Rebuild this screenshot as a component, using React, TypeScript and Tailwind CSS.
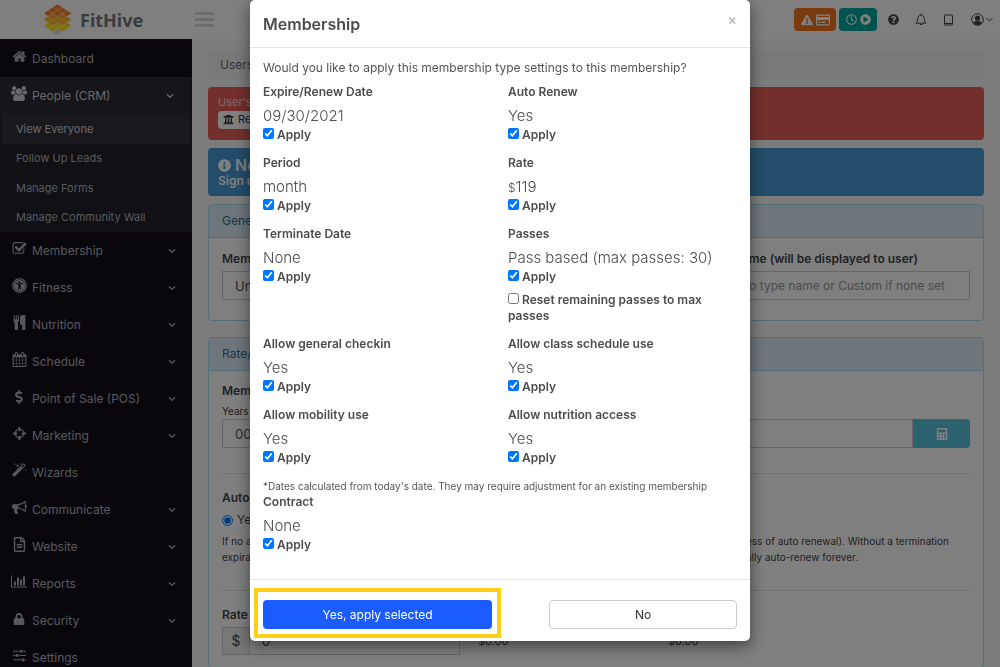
import { useState } from 'react';
import type { ReactNode } from 'react';
import {
    FaCalculator,
    FaChevronDown,
    FaDollarSign,
    FaExclamationTriangle,
    FaInfoCircle,
    FaLock,
    FaPlayCircle,
    FaQuestionCircle,
    FaRegClock,
    FaRegCreditCard,
    FaRegFileAlt,
    FaUniversalAccess,
    FaUniversity,
} from 'react-icons/fa';

const PATHS = {
    home: 'M1472 992v480q0 26-19 45t-45 19h-384v-384h-256v384h-384q-26 0-45-19t-19-45v-480q0-1 .5-3t.5-3l575-474 575 474q1 2 1 6zm223-69l-62 74q-8 9-21 11h-3q-13 0-21-7l-692-577-692 577q-12 8-24 7-13-2-21-11l-62-74q-8-10-7-23.5t11-21.5l719-599q32-26 76-26t76 26l244 204v-195q0-14 9-23t23-9h192q14 0 23 9t9 23v408l219 182q10 8 11 21.5t-7 23.5z',
    users: 'M593 896q-162 5-265 128h-134q-82 0-138-40.5t-56-118.5q0-353 124-353 6 0 43.5 21t97.5 42.5 119 21.5q67 0 133-23-5 37-5 66 0 139 81 256zm1071 637q0 120-73 189.5t-194 69.5h-874q-121 0-194-69.5t-73-189.5q0-53 3.5-103.5t14-109 26.5-108.5 43-97.5 62-81 85.5-53.5 111.5-20q10 0 43 21.5t73 48 107 48 135 21.5 135-21.5 107-48 73-48 43-21.5q61 0 111.5 20t85.5 53.5 62 81 43 97.5 26.5 108.5 14 109 3.5 103.5zm-1024-1277q0 106-75 181t-181 75-181-75-75-181 75-181 181-75 181 75 75 181zm704 384q0 159-112.5 271.5t-271.5 112.5-271.5-112.5-112.5-271.5 112.5-271.5 271.5-112.5 271.5 112.5 112.5 271.5zm576 225q0 78-56 118.5t-138 40.5h-134q-103-123-265-128 81-117 81-256 0-29-5-66 66 23 133 23 59 0 119-21.5t97.5-42.5 43.5-21q124 0 124 353zm-128-609q0 106-75 181t-181 75-181-75-75-181 75-181 181-75 181 75 75 181z',
    check: 'M1472 930v318q0 119-84.5 203.5t-203.5 84.5h-832q-119 0-203.5-84.5t-84.5-203.5v-832q0-119 84.5-203.5t203.5-84.5h832q63 0 117 25 15 7 18 23 3 17-9 29l-49 49q-10 10-23 10-3 0-9-2-23-6-45-6h-832q-66 0-113 47t-47 113v832q0 66 47 113t113 47h832q66 0 113-47t47-113v-254q0-13 9-22l64-64q10-10 23-10 6 0 12 3 20 8 20 29zm231-489l-814 814q-24 24-57 24t-57-24l-430-430q-24-24-24-57t24-57l110-110q24-24 57-24t57 24l263 263 647-647q24-24 57-24t57 24l110 110q24 24 24 57t-24 57z',
    cutlery: 'M832 64v640q0 61-35.5 111t-92.5 70v779q0 52-38 90t-90 38h-128q-52 0-90-38t-38-90v-779q-57-20-92.5-70t-35.5-111v-640q0-26 19-45t45-19 45 19 19 45v416q0 26 19 45t45 19 45-19 19-45v-416q0-26 19-45t45-19 45 19 19 45v416q0 26 19 45t45 19 45-19 19-45v-416q0-26 19-45t45-19 45 19 19 45zm768 0v1600q0 52-38 90t-90 38h-128q-52 0-90-38t-38-90v-512h-224q-13 0-22.5-9.5t-9.5-22.5v-800q0-132 94-226t226-94h256q26 0 45 19t19 45z',
    calendar: 'M192 1664h288v-288h-288v288zm352 0h320v-288h-320v288zm-352-352h288v-320h-288v320zm352 0h320v-320h-320v320zm-352-384h288v-288h-288v288zm736 736h320v-288h-320v288zm-384-736h320v-288h-320v288zm768 736h288v-288h-288v288zm-384-352h320v-320h-320v320zm-352-864v-288q0-13-9.5-22.5t-22.5-9.5h-64q-13 0-22.5 9.5t-9.5 22.5v288q0 13 9.5 22.5t22.5 9.5h64q13 0 22.5-9.5t9.5-22.5zm736 864h288v-320h-288v320zm-384-384h320v-288h-320v288zm384 0h288v-288h-288v288zm32-480v-288q0-13-9.5-22.5t-22.5-9.5h-64q-13 0-22.5 9.5t-9.5 22.5v288q0 13 9.5 22.5t22.5 9.5h64q13 0 22.5-9.5t9.5-22.5zm384-64v1280q0 52-38 90t-90 38h-1408q-52 0-90-38t-38-90v-1280q0-52 38-90t90-38h128v-96q0-66 47-113t113-47h64q66 0 113 47t47 113v96h384v-96q0-66 47-113t113-47h64q66 0 113 47t47 113v96h128q52 0 90 38t38 90z',
    crosshairs: 'M1325 1024h-109q-26 0-45-19t-19-45v-128q0-26 19-45t45-19h109q-32-108-112.5-188.5t-188.5-112.5v109q0 26-19 45t-45 19h-128q-26 0-45-19t-19-45v-109q-108 32-188.5 112.5t-112.5 188.5h109q26 0 45 19t19 45v128q0 26-19 45t-45 19h-109q32 108 112.5 188.5t188.5 112.5v-109q0-26 19-45t45-19h128q26 0 45 19t19 45v109q108-32 188.5-112.5t112.5-188.5zm339-192v128q0 26-19 45t-45 19h-143q-37 161-154.5 278.5t-278.5 154.5v143q0 26-19 45t-45 19h-128q-26 0-45-19t-19-45v-143q-161-37-278.5-154.5t-154.5-278.5h-143q-26 0-45-19t-19-45v-128q0-26 19-45t45-19h143q37-161 154.5-278.5t278.5-154.5v-143q0-26 19-45t45-19h128q26 0 45 19t19 45v143q161 37 278.5 154.5t154.5 278.5h143q26 0 45 19t19 45z',
    wand: 'M1190 581l293-293-107-107-293 293 107 107zm447-293q0 27-18 45l-1286 1286q-18 18-45 18t-45-18l-198-198q-18-18-18-45t18-45l1286-1286q18-18 45-18t45 18l198 198q18 18 18 45zM351 98l98 30-98 30-30 98-30-98-98-30 98-30 30-98zm350 162l196 60-196 60-60 196-60-196-196-60 196-60 60-196zm930 478l98 30-98 30-30 98-30-98-98-30 98-30 30-98zM991 98l98 30-98 30-30 98-30-98-98-30 98-30 30-98z',
    bullhorn: 'M1664 640q53 0 90.5 37.5t37.5 90.5-37.5 90.5-90.5 37.5v384q0 52-38 90t-90 38q-417-347-812-380-58 19-91 66t-31 100.5 40 92.5q-20 33-23 65.5t6 58 33.5 55 48 50 61.5 50.5q-29 58-111.5 83t-168.5 11.5-132-55.5q-7-23-29.5-87.5t-32-94.5-23-89-15-101 3.5-98.5 22-110.5h-122q-66 0-113-47t-47-113v-192q0-66 47-113t113-47h480q435 0 896-384 52 0 90 38t38 90v384zm-128 604v-954q-394 302-768 343v270q377 42 768 341z',
    chart: 'M640 896v512h-256v-512h256zm384-512v1024h-256v-1024h256zm1024 1152v128h-2048v-1536h128v1408h1920zm-640-896v768h-256v-768h256zm384-384v1152h-256v-1152h256z',
    sliders: 'M128 320h768v128h-768zM1344 320h320v128h-320zM960 224h320v320h-320zM128 832h256v128h-256zM832 832h832v128h-832zM448 736h320v320h-320zM128 1344h960v128h-960zM1536 1344h128v128h-128zM1152 1248h320v320h-320z',
};

function Glyph({ d, width = 15, box = 1792 }: { d: string; width?: number; box?: number }) {
    return (
        <svg width={width} height={15} viewBox={`0 0 ${box} 1792`} fill="currentColor" aria-hidden="true">
            <path d={d} />
        </svg>
    );
}

// rows of the honeycomb logo: number of cells and fill
const HIVE: [number, string][] = [
    [1, '#ff7a2a'],
    [2, '#ff7a2a'],
    [3, '#ff7a2a'],
    [2, '#ffa51e'],
    [3, '#ffb41e'],
    [2, '#ffb41e'],
    [3, '#ffe010'],
    [2, '#ffe010'],
    [1, '#dddddd'],
];

function Logo() {
    return (
        <svg width="29" height="31" viewBox="0 0 29 31" aria-hidden="true">
            {HIVE.map(([count, fill], row) =>
                Array.from({ length: count }, (_, i) => {
                    const cx = 14.5 + (i - (count - 1) / 2) * 9.3;
                    const cy = 3.1 + row * 3.1;
                    return <path key={`${row}-${i}`} fill={fill} d={`M${cx} ${cy - 2.9}l4.4 2.9-4.4 2.9-4.4-2.9z`} />;
                })
            )}
        </svg>
    );
}

interface MenuItem {
    label: string;
    icon: ReactNode;
    arrow?: boolean;
}

const menu: MenuItem[] = [
    { label: 'Membership', icon: <Glyph d={PATHS.check} />, arrow: true },
    { label: 'Fitness', icon: <FaUniversalAccess size={15} />, arrow: true },
    { label: 'Nutrition', icon: <Glyph d={PATHS.cutlery} />, arrow: true },
    { label: 'Schedule', icon: <Glyph d={PATHS.calendar} />, arrow: true },
    { label: 'Point of Sale (POS)', icon: <FaDollarSign size={14} />, arrow: true },
    { label: 'Marketing', icon: <Glyph d={PATHS.crosshairs} />, arrow: true },
    { label: 'Wizards', icon: <Glyph d={PATHS.wand} /> },
    { label: 'Communicate', icon: <Glyph d={PATHS.bullhorn} />, arrow: true },
    { label: 'Website', icon: <FaRegFileAlt size={15} />, arrow: true },
    { label: 'Reports', icon: <Glyph d={PATHS.chart} width={16} box={2048} />, arrow: true },
    { label: 'Security', icon: <FaLock size={12} />, arrow: true },
    { label: 'Settings', icon: <Glyph d={PATHS.sliders} /> },
];

function SidebarLink({ label, icon, arrow }: MenuItem) {
    return (
        <a href="#" className="flex h-[37px] items-center pl-[11px] pr-4 text-xs">
            <span className="mr-[5px] flex w-4 justify-center pb-1">{icon}</span>
            <span className="flex-1">{label}</span>
            {arrow && <FaChevronDown size={8} />}
        </a>
    );
}

function Sidebar() {
    return (
        <nav className="w-48 shrink-0 bg-[#120f19] pt-px text-[#aeb1b8]">
            <SidebarLink label="Dashboard" icon={<Glyph d={PATHS.home} />} />
            <div className="bg-[#232129] px-[2px]">
                <div className="-ml-[2px] bg-[#2c2b32] text-[#cfd0d4]">
                    <SidebarLink label="People (CRM)" icon={<Glyph d={PATHS.users} width={16} box={1920} />} arrow />
                </div>
                <div className="grid h-[118px] grid-rows-4 text-[11px]">
                    <a href="#" className="flex items-center bg-[#323138] pl-[14px] text-[#d4d5d9]">View Everyone</a>
                    <a href="#" className="flex items-center pl-[14px]">Follow Up Leads</a>
                    <a href="#" className="flex items-center pl-[14px]">Manage Forms</a>
                    <a href="#" className="flex items-center pl-[14px]">Manage Community Wall</a>
                </div>
            </div>
            {menu.map((item) => (
                <SidebarLink key={item.label} {...item} />
            ))}
        </nav>
    );
}

function Header() {
    return (
        <header className="flex h-[39px] shrink-0 items-center bg-white pl-[43px] pr-[7px]">
            <Logo />
            <span className="ml-2 w-[115px] font-['Noto_Sans'] text-lg font-bold text-[#77777b]">FitHive</span>
            <button aria-label="Toggle menu" className="flex flex-col gap-[3px]">
                <span className="h-[3px] w-[19px] bg-[#dadada]" />
                <span className="h-[3px] w-[19px] bg-[#dadada]" />
                <span className="h-[3px] w-[19px] bg-[#dadada]" />
            </button>
            <div className="ml-auto flex items-center text-[#444]">
                <button aria-label="Billing alerts" className="flex h-[23px] w-[42px] items-center justify-center gap-[3px] rounded-sm bg-[#f47421] text-white">
                    <FaExclamationTriangle size={12} />
                    <FaRegCreditCard size={14} />
                </button>
                <button aria-label="Time clock" className="ml-[3px] flex h-[23px] w-[38px] items-center justify-center gap-[3px] rounded-sm bg-[#00a79d] text-white">
                    <FaRegClock size={11} />
                    <FaPlayCircle size={11} />
                </button>
                <button aria-label="Help" className="ml-[11px]"><FaQuestionCircle size={11} /></button>
                <button aria-label="Notifications" className="ml-4">
                    <svg width="12" height="13" viewBox="0 0 12 13" fill="none" stroke="currentColor" aria-hidden="true">
                        <path d="M1 10.2h10C9.6 9 9.3 7.5 9.2 5.5 9 3.2 8 2 6 2S3 3.2 2.800 5.5C2.7 7.5 2.4 9 1 10.2zM6 .5V2M4.8 11.5h2.400" />
                    </svg>
                </button>
                <button aria-label="Devices" className="ml-[17px]">
                    <svg width="9" height="12" viewBox="0 0 9 12" fill="none" stroke="currentColor" aria-hidden="true">
                        <rect x=".5" y="1" width="8" height="10" rx="1" />
                        <path d="M.5 9.5h8" />
                    </svg>
                </button>
                <button aria-label="Account" className="ml-[18px] flex items-center gap-[2px]">
                    <svg width="13" height="13" viewBox="0 0 13 13" aria-hidden="true">
                        <circle cx="6.5" cy="6.5" r="5.8" fill="none" stroke="currentColor" />
                        <circle cx="6.5" cy="5" r="2.6" fill="currentColor" />
                        <path d="M2.3 10C3 8.2 4.5 7.800 6.5 7.800s3.500.4 4.200 2.200a5.300 5.300 0 0 1-8.400 0z" fill="currentColor" />
                    </svg>
                    <svg width="7" height="5" viewBox="0 0 7 5" fill="none" stroke="currentColor" aria-hidden="true">
                        <path d="M.5 1l3 3 3-3" />
                    </svg>
                </button>
            </div>
        </header>
    );
}

function Panel({ title, children }: { title: string; children: ReactNode }) {
    return (
        <section className="mb-4 rounded border border-[#a5dfe8] bg-white">
            <h2 className="flex h-[33px] items-center rounded-t border-b border-[#a5dfe8] bg-[#dcecf7] px-[13px] text-xs text-[#31708f]">{title}</h2>
            <div className="px-[13px]">{children}</div>
        </section>
    );
}

function Page() {
    return (
        <main className="min-w-0 flex-1 bg-[#f8f8f8] px-4 pt-[11px] text-xs text-[#444]">
            <div className="mb-2 flex h-[29px] items-center rounded bg-[#f3f3f3] px-3 text-[#667]">Users</div>
            <div className="mb-2 h-[53px] rounded bg-[#e75e54] px-[10px] pt-2 text-[#f8d8d4]">
                <p className="text-[11px]">User's</p>
                <button className="mt-[1px] flex h-[18px] items-center gap-1 rounded-sm bg-white px-[5px] text-[11px] text-[#333]">
                    <FaUniversity size={11} /> Rem
                </button>
            </div>
            <div className="mb-2 h-12 rounded bg-[#469bd4] px-[10px] pt-2 text-white">
                <p className="flex items-center gap-1 text-base/[18px] font-semibold">
                    <FaInfoCircle size={13} /> New
                </p>
                <p className="text-xs/[14px] font-semibold">Sign up</p>
            </div>

            <Panel title="General">
                <div className="grid h-[82px] grid-cols-2 gap-4 pt-[13px]">
                    <div>
                        <label htmlFor="type" className="block font-semibold">Mem</label>
                        <input id="type" defaultValue="Un" className="mt-1 h-[29px] w-full border border-[#ccc] px-3 text-[13px] text-[#555]" />
                    </div>
                    <div>
                        <label htmlFor="name" className="block pr-[52px] text-right font-semibold">name (will be displayed to user)</label>
                        <input id="name" placeholder="to type name or Custom if none set" className="mt-1 h-[29px] w-full border border-[#ccc] pl-3 pr-6 text-right text-xs placeholder:text-[#999]" />
                    </div>
                </div>
            </Panel>

            <Panel title="Rate/">
                <div className="border-b border-[#e4e4e4] pb-[25px] pt-3">
                    <p className="font-semibold">Mem</p>
                    <label htmlFor="years" className="mt-1 block text-[10px]/4">Years</label>
                    <div className="flex">
                        <input id="years" defaultValue="00" className="h-[29px] flex-1 border border-[#ccc] px-3 text-[13px] text-[#555]" />
                        <button aria-label="Calculate" className="flex w-[57px] items-center justify-center rounded-r-sm bg-[#59c4dc] text-white">
                            <FaCalculator size={12} />
                        </button>
                    </div>
                </div>
                <div className="border-b border-[#e4e4e4] pb-[25px] pt-4">
                    <p className="font-semibold">Auto</p>
                    <label className="mt-[6px] flex items-center gap-1">
                        <input type="radio" name="renew" defaultChecked className="h-[11px] w-[11px]" />
                        Yes
                    </label>
                    <div className="mt-[5px] flex justify-between text-[10px]/4">
                        <p>If no a<br />expirat</p>
                        <p className="w-[224px]">
                            ess of auto renewal). Without a termination
                            <br />
                            ally auto-renew forever.
                        </p>
                    </div>
                </div>
                <div className="pb-3 pt-4">
                    <label htmlFor="rate" className="block font-semibold">Rate</label>
                    <div className="mt-1 flex items-center">
                        <span className="flex h-[28px] w-[28px] items-center justify-center border border-[#ccc] bg-[#eee] text-sm">$</span>
                        <input id="rate" defaultValue="0" className="h-[28px] w-[210px] border border-l-0 border-[#ccc] px-3 text-[13px]" />
                        <span className="ml-[18px] w-[190px] text-[11px]">$0.00</span>
                        <span className="text-[11px]">$0.00</span>
                    </div>
                </div>
            </Panel>
        </main>
    );
}

interface Setting {
    id: string;
    label: string;
    value: ReactNode;
    reset?: boolean;
}

const settings: Setting[] = [
    { id: 'expire', label: 'Expire/Renew Date', value: '09/30/2021' },
    { id: 'autoRenew', label: 'Auto Renew', value: 'Yes' },
    { id: 'period', label: 'Period', value: 'month' },
    { id: 'rateApply', label: 'Rate', value: <><span className="text-xs">$</span>119</> },
    { id: 'terminate', label: 'Terminate Date', value: 'None' },
    { id: 'passes', label: 'Passes', value: 'Pass based (max passes: 30)', reset: true },
    { id: 'checkin', label: 'Allow general checkin', value: 'Yes' },
    { id: 'classes', label: 'Allow class schedule use', value: 'Yes' },
    { id: 'mobility', label: 'Allow mobility use', value: 'Yes' },
    { id: 'nutrition', label: 'Allow nutrition access', value: 'Yes' },
];

function SettingField({ setting }: { setting: Setting }) {
    const [apply, setApply] = useState(true);
    const [reset, setReset] = useState(false);

    return (
        <div className="mb-3 text-xs/4 font-semibold text-[#4c4c4c]">
            <p>{setting.label}</p>
            <p className="mt-1 text-[15px]/[23px] font-light">{setting.value}</p>
            <label className="block">
                <input type="checkbox" checked={apply} onChange={(e) => setApply(e.target.checked)} className="mr-[3px] h-[11px] w-[11px]" />
                Apply
            </label>
            {setting.reset && (
                <label className="mt-[7px] block">
                    <input type="checkbox" checked={reset} onChange={(e) => setReset(e.target.checked)} className="mr-[3px] h-[11px] w-[11px]" />
                    Reset remaining passes to max passes
                </label>
            )}
        </div>
    );
}

function MembershipModal() {
    return (
        <div className="fixed inset-0 overflow-hidden bg-black/50">
            <div role="dialog" aria-labelledby="title" className="mx-auto w-[500px] rounded-[5px] bg-white shadow-[0_5px_15px_rgba(0,0,0,0.5)]">
                <div className="flex h-12 items-center justify-between border-b border-[#e5e5e5] px-[13px]">
                    <h1 id="title" className="text-base font-semibold text-[#4c4c4c]">Membership</h1>
                    <button aria-label="Close" className="pb-2 text-sm font-semibold text-[#bbb]">×</button>
                </div>
                <div className="px-[13px] pb-[14px] pt-3 text-[#555]">
                    <p className="mb-2 text-xs/4">Would you like to apply this membership type settings to this membership?</p>
                    <div className="grid grid-cols-2 gap-x-4">
                        {settings.map((s) => (
                            <SettingField key={s.id} setting={s} />
                        ))}
                    </div>
                    <p className="text-[10px]/4">*Dates calculated from today's date. They may require adjustment for an existing membership</p>
                    <SettingField setting={{ id: 'contract', label: 'Contract', value: 'None' }} />
                </div>
                <div className="flex justify-between border-t border-[#e5e5e5] px-[13px] pb-3 pt-5 text-xs">
                    <div className="relative w-[229px]">
                        <button className="h-[29px] w-full rounded-sm bg-[#1a5cff] text-white">Yes, apply selected</button>
                        <div className="pointer-events-none absolute -inset-x-[9px] -bottom-[9px] -top-3 border-4 border-[#fdd017]" />
                    </div>
                    <button className="h-[29px] w-[188px] rounded-sm border border-[#ccc] text-[#333]">No</button>
                </div>
            </div>
        </div>
    );
}

export default function App() {
    return (
        <div className="flex h-screen flex-col overflow-hidden font-['Inter',sans-serif]">
            <Header />
            <div className="flex min-h-0 flex-1">
                <Sidebar />
                <Page />
            </div>
            <MembershipModal />
        </div>
    );
}
